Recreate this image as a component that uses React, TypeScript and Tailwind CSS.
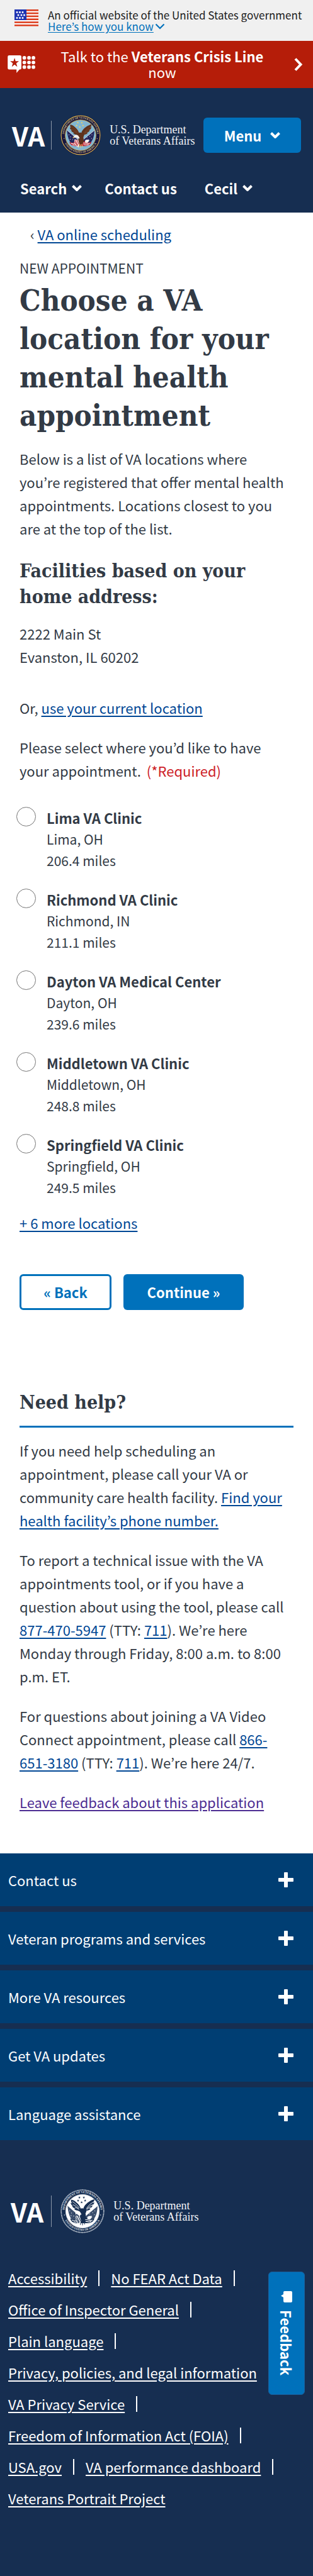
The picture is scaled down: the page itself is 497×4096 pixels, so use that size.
import { useState } from 'react';

const sans = "font-['Noto_Sans_CJK_KR','Noto_Sans',sans-serif]";
const slab = "font-['DejaVu_Serif_Condensed','DejaVu_Serif',serif]";
const link = 'text-[#004795] underline underline-offset-3';

const clinics = [
  { name: 'Lima VA Clinic', city: 'Lima, OH', miles: '206.4 miles' },
  { name: 'Richmond VA Clinic', city: 'Richmond, IN', miles: '211.1 miles' },
  { name: 'Dayton VA Medical Center', city: 'Dayton, OH', miles: '239.6 miles' },
  { name: 'Middletown VA Clinic', city: 'Middletown, OH', miles: '248.8 miles' },
  { name: 'Springfield VA Clinic', city: 'Springfield, OH', miles: '249.5 miles' },
];

const sections = [
  'Contact us',
  'Veteran programs and services',
  'More VA resources',
  'Get VA updates',
  'Language assistance',
];

const footerLinks = [
  'Accessibility',
  'No FEAR Act Data',
  'Office of Inspector General',
  'Plain language',
  'Privacy, policies, and legal information',
  'VA Privacy Service',
  'Freedom of Information Act (FOIA)',
  'USA.gov',
  'VA performance dashboard',
  'Veterans Portrait Project',
];

function Chevron({ width = 4 }: { width?: number }) {
  return (
    <svg viewBox="0 0 16 10" className="h-[10px] w-4" fill="none" stroke="currentColor" strokeWidth={width} aria-hidden="true">
      <path d="M1.5 1.5 8 8l6.5-6.5" />
    </svg>
  );
}

function Flag() {
  const stars = [
    [4, 4.5], [8.5, 4.5], [13, 4.5],
    [6, 9], [11, 9], [15.5, 9],
    [4, 13.5], [8.5, 13.5], [13, 13.5],
  ];
  return (
    <svg viewBox="0 0 38 27" className="h-[27px] w-[38px] shrink-0" aria-hidden="true">
      <rect width="38" height="27" fill="#fff" />
      {[0, 4.8, 9.6, 14.4, 19.2, 24].map((y) => (
        <rect key={y} y={y} width="38" height="2.6" fill="#db3e1f" />
      ))}
      <rect width="19" height="17" fill="#1e33b1" />
      {stars.map(([x, y]) => (
        <rect key={`${x}-${y}`} x={x - 1.3} y={y - 1.3} width="2.6" height="2.6" fill="#fff" />
      ))}
    </svg>
  );
}

function CrisisIcon() {
  return (
    <svg viewBox="0 0 56 36" className="h-7 w-11 shrink-0" fill="#fff" aria-hidden="true">
      <path d="M3 0h22a3 3 0 0 1 3 3v23a3 3 0 0 1-3 3h-1l-6 7v-7H3a3 3 0 0 1-3-3V3a3 3 0 0 1 3-3Z" />
      <path
        fill="#b51d09"
        d="m14 5 2.1 7h6.9l-5.5 4.1 2.1 7.4L14 19l-5.6 4.5 2.1-7.4L5 12h6.9Z"
      />
      {[34, 43.5, 52.5].map((x) => [5, 14.5, 24].map((y) => <circle key={`${x}-${y}`} cx={x} cy={y} r="3.7" />))}
    </svg>
  );
}

const star = 'm0-3 .7 2h2.1l-1.7 1.3.6 2L0 1.1l-1.7 1.2.6-2L-2.8-1h2.1Z';

function Seal({ id, mono = false, className }: { id: string; mono?: boolean; className: string }) {
  const c = mono
    ? { rim: '#d5dbe3', ring: '#162e51', letters: '#e6eaf0', sky: '#fff', wing: '#162e51', feather: '#fff', flag: '#3a4e6d', stars: '#162e51', red: '#162e51', white: '#fff' }
    : { rim: '#d8b350', ring: '#19163f', letters: '#dcc782', sky: '#82b6d3', wing: '#5e321d', feather: '#7d4a2c', flag: '#23265d', stars: '#f0d060', red: '#bf2433', white: '#f6f1ee' };
  return (
    <svg viewBox="0 0 100 100" className={className} role="img" aria-label="Department of Veterans Affairs seal">
      <defs>
        <path id={`${id}-top`} d="M9.6 56.5A41 41 0 1 1 90.4 56.5" />
        <path id={`${id}-bottom`} d="M7.5 62.5A44.3 44.3 0 0 0 92.5 62.5" />
      </defs>
      <circle cx="50" cy="50" r="50" fill={c.ring} />
      <circle cx="50" cy="50" r="48.3" fill="none" stroke={c.rim} strokeWidth={mono ? 2.4 : 1.8} strokeDasharray={mono ? '1.6 .8' : undefined} />
      <circle cx="50" cy="50" r="38" fill={c.sky} stroke={c.rim} strokeWidth="1.4" />
      <g fill={c.letters} fontFamily="Liberation Serif" fontWeight="700" fontSize="6.6" textAnchor="middle">
        <text><textPath href={`#${id}-top`} startOffset="50%">DEPARTMENT OF VETERANS AFFAIRS</textPath></text>
        <text><textPath href={`#${id}-bottom`} startOffset="50%">UNITED STATES OF AMERICA</textPath></text>
      </g>
      <circle cx="9" cy="58.5" r="1" fill={c.letters} />
      <circle cx="91" cy="58.5" r="1" fill={c.letters} />
      {[[43, 19], [53, 19], [40, 26], [56, 26], [48, 30]].map(([x, y]) => (
        <path key={`${x}-${y}`} transform={`translate(${x} ${y})`} d={star} fill={c.stars} />
      ))}
      <path d="M16 37 45 62 34 74C25 72 18 61 16 37Z" fill={c.flag} />
      <path d="M84 38 54 63 66 74C77 71 84 58 84 38Z" fill={c.flag} />
      <path d="M16 37 45 62M84 38 54 63" stroke={c.white} strokeWidth="1.3" />
      {[[21, 49], [25, 54], [24, 60], [30, 61], [78, 49], [73, 53], [77, 58], [70, 61], [66, 56]].map(([x, y]) => (
        <circle key={`${x}-${y}`} cx={x} cy={y} r=".9" fill={c.white} />
      ))}
      <path d="M22 66c10 7 15-1 22-1h14c6 0 9 7 19 1-2 9-9 11-18 11H40c-9 0-16-2-18-11Z" fill={c.red} />
      <path d="M26 70c8 4 12-1 18-1M30 74c6 2 9-1 14-1M56 69c8 0 10 4 17 1M57 73c5 0 8 3 13 0" fill="none" stroke={c.white} strokeWidth="1.6" />
      <path
        d="M24 24c0 4 0 6 3 8-2 0-3-1-4-1 1 4 3 6 6 7l-3 0c2 4 5 5 8 6l-3 1c3 3 6 3 9 4 1 5 3 8 6 9l8 0c3-2 4-5 5-9 4-1 7-2 9-4l-3-1c4-1 6-3 8-6l-3 0c4-2 6-4 7-8l-4 1c3-2 4-5 4-8-6 1-14 6-19 11-3 3-5 6-6 10-2-1-4-1-6 0-2-6-5-10-10-14-4-4-8-6-12-6Z"
        fill={c.wing}
      />
      <path d="M27 28c6 4 11 8 16 15M28 35c5 2 9 5 13 9M33 41c4 1 7 3 9 5M77 28c-7 3-13 8-18 16M74 35c-6 2-10 5-14 10M69 41c-4 1-7 3-10 6" fill="none" stroke={c.feather} strokeWidth="1.2" />
      <path d="M45 56c3-4 9-4 12 0l1 10-5 7h-5l-4-7Z" fill={c.wing} />
      <path d="M33 53c2-4 8-5 11-2 2 2 2 4 4 6-3 2-6 1-7-1-2-1-4 0-8 1 1-2 1-3 0-4Z" fill={c.white} />
      <path d="M33 53c-2 1-3 3-2 5l3-2Z" fill={c.stars} />
      <path d="M35 60l9 2 3 10-2 8-6-3-5-9Z" fill={c.white} />
      <path d="m36 62 7 13M40 61l6 12M35 66l7 11" stroke={c.red} strokeWidth="1.6" />
      <path d="M61 63c3-3 8-3 11 0l-5 6-6-1Z" fill={c.white} />
      <path d="m47 72-2 9M50 73v9M53 72l2 8" stroke={c.stars} strokeWidth="1.4" />
    </svg>
  );
}

function Brand({ id, mono = false }: { id: string; mono?: boolean }) {
  return (
    <a href="#home" className="flex items-center text-white">
      <span className="text-[42px] leading-[42px] font-bold">VA</span>
      <span className={mono ? 'ml-3 h-[50px] w-px bg-[#8b97a8]' : 'ml-2.5 h-[46px] w-px bg-[#8b97a8]'} />
      <Seal id={id} mono={mono} className={mono ? 'ml-3.5 size-[70px]' : 'ml-3.5 size-[64px]'} />
      <span className="ml-3.5 font-['Liberation_Serif',serif] text-[18px] leading-[18px] whitespace-nowrap text-[#f1f3f6]">
        U.S. Department
        <br />
        of Veterans Affairs
      </span>
    </a>
  );
}

export default function App() {
  const [choice, setChoice] = useState('');
  return (
    <div className={`relative min-h-screen bg-white text-[22px] leading-[37px] text-[#323a45] ${sans}`}>
      <div className="flex items-start gap-[15px] bg-[#f0f0f0] pt-[15px] pb-3.5 pl-[23px] text-[17px] leading-[18px] text-[#1b1b1b]">
        <Flag />
        <div>
          <p className="whitespace-nowrap">An official website of the United States government</p>
          <button type="button" className="flex items-center gap-0.5 text-[#0071bb]">
            <span className="underline underline-offset-2">Here’s how you know</span>
            <Chevron width={2.2} />
          </button>
        </div>
      </div>

      <a href="#crisis" className="flex items-center bg-[#b51d09] px-3 pt-3 pb-[13px] text-white">
        <CrisisIcon />
        <span className="mr-9 ml-7 flex-1 text-center leading-[25px]">
          Talk to the <strong>Veterans Crisis Line</strong> now
        </span>
        <svg viewBox="0 0 14 21" className="mr-1 h-[21px] w-3.5" fill="none" stroke="#fff" strokeWidth="4" aria-hidden="true">
          <path d="m2 1.5 8.5 9-8.5 9" />
        </svg>
      </a>

      <header className="bg-[#162e51] pt-[43px] pb-6 text-white">
        <div className="flex items-center justify-between px-[19px]">
          <Brand id="seal-header" />
          <button
            type="button"
            className="flex h-14 w-[155px] items-center justify-center gap-3.5 rounded-md bg-[#0071bb] leading-[30px] font-bold"
          >
            Menu
            <Chevron />
          </button>
        </div>
        <nav className="mt-[37px] flex items-center pl-8 leading-[30px] font-bold">
          <button type="button" className="flex items-center gap-2">
            Search
            <Chevron />
          </button>
          <a href="#contact" className="ml-9">
            Contact us
          </a>
          <button type="button" className="ml-11 flex items-center gap-2">
            Cecil
            <Chevron />
          </button>
        </nav>
      </header>

      <main className="px-[31px] pt-4 pb-[63px]">
        <div className="pl-[17px]">
          ‹{' '}
          <a href="#scheduling" className={link}>
            VA online scheduling
          </a>
        </div>
        <p className="mt-5 text-[21px] leading-[30px]">NEW APPOINTMENT</p>
        <h1 className={`mt-1.5 text-[47px] leading-[61px] font-bold ${slab}`}>
          Choose a VA location for your mental health appointment
        </h1>
        <p className="mt-5 pr-2">
          Below is a list of VA locations where you’re registered that offer mental health appointments. Locations
          closest to you are at the top of the list.
        </p>
        <h2 className={`mt-7 text-[30px] leading-[41px] font-bold ${slab}`}>Facilities based on your home address:</h2>
        <address className="mt-5 not-italic">
          2222 Main St
          <br />
          Evanston, IL 60202
        </address>
        <p className="mt-11">
          Or,{' '}
          <a href="#location" className={link}>
            use your current location
          </a>
        </p>

        <fieldset className="mt-[26px]">
          <legend className="pr-2">
            Please select where you’d like to have your appointment. <span className="ml-1 text-[#cd2026]">(*Required)</span>
          </legend>
          <div className="mt-[39px] flex flex-col gap-7">
            {clinics.map((clinic) => (
              <label key={clinic.name} className="-ml-[5px] flex items-start gap-[17px] text-[21px] leading-[34px]">
                <input
                  type="radio"
                  name="clinic"
                  value={clinic.name}
                  checked={choice === clinic.name}
                  onChange={() => setChoice(clinic.name)}
                  className="size-[31px] shrink-0 appearance-none rounded-full border border-[#757575] bg-white checked:bg-[#0071bb]"
                />
                <span className="flex flex-col">
                  <strong className="text-[22px]">{clinic.name}</strong>
                  <span>{clinic.city}</span>
                  <span>{clinic.miles}</span>
                </span>
              </label>
            ))}
          </div>
        </fieldset>

        <button type="button" className={`mt-[21px] block ${link}`}>
          + 6 more locations
        </button>

        <div className="mt-[63px] flex gap-[19px] font-bold">
          <button type="button" className="h-[57px] w-[146px] rounded-md border-3 border-[#0071bb] text-[#0071bb]">
            « Back
          </button>
          <button type="button" className="h-[57px] w-[191px] rounded-md bg-[#0071bb] text-white">
            Continue »
          </button>
        </div>

        <h2 className={`mt-[126px] border-b-3 border-[#0071bb] pb-[17px] text-[30px] leading-[41px] font-bold ${slab}`}>
          Need help?
        </h2>
        <p className="mt-[18px]">
          If you need help scheduling an appointment, please call your VA or community care health facility.{' '}
          <a href="#facilities" className={link}>
            Find your health facility’s phone number.
          </a>
        </p>
        <p className="mt-[26px]">
          To report a technical issue with the VA appointments tool, or if you have a question about using the tool,
          please call{' '}
          <a href="tel:8774705947" className={link}>
            877-470-5947
          </a>{' '}
          (TTY:{' '}
          <a href="tel:711" className={link}>
            711
          </a>
          ). We’re here Monday through Friday, 8:00 a.m. to 8:00 p.m. ET.
        </p>
        <p className="mt-[26px]">
          For questions about joining a VA Video Connect appointment, please call{' '}
          <a href="tel:8666513180" className={link}>
            866-651-3180
          </a>{' '}
          (TTY:{' '}
          <a href="tel:711" className={link}>
            711
          </a>
          ). We’re here 24/7.
        </p>
        <p className="mt-[26px]">
          <a href="#feedback" className="text-[#4c2c92] underline underline-offset-3">
            Leave feedback about this application
          </a>
        </p>
      </main>

      <footer className="bg-[#162e51] pb-[101px] text-white">
        <div className="flex flex-col gap-[9px]">
          {sections.map((title) => (
            <button
              key={title}
              type="button"
              className="flex h-[84px] items-center justify-between bg-[#003e73] pr-[31px] pl-[13px]"
            >
              {title}
              <svg viewBox="0 0 24 24" className="size-6" fill="#fff" aria-hidden="true">
                <rect x="9" y="0" width="6" height="24" rx="1" />
                <rect x="0" y="9" width="24" height="6" rx="1" />
              </svg>
            </button>
          ))}
        </div>
        <div className="mt-[78px] flex pl-[17px]">
          <Brand id="seal-footer" mono />
        </div>
        <ul className="mt-[46px] flex flex-wrap pl-[13px] leading-[50px]">
          {footerLinks.map((text, i) => (
            <li key={text} className="flex items-center whitespace-nowrap">
              <a href={`#link-${i}`} className="underline underline-offset-3">
                {text}
              </a>
              {i < footerLinks.length - 1 && <span className="mx-[18px] h-[25px] w-0.5 bg-white" />}
            </li>
          ))}
        </ul>
      </footer>

      <button
        type="button"
        className="absolute right-[13px] bottom-[290px] flex h-[196px] w-[58px] items-center justify-center gap-3 rounded-md border border-[#1a5f9c] bg-[#0071bb] leading-[30px] font-bold text-white [writing-mode:vertical-rl]"
      >
        <svg viewBox="0 0 18 18" className="size-[18px]" fill="#fff" aria-hidden="true">
          <path d="M6 0h10a2 2 0 0 1 2 2v14a2 2 0 0 1-2 2H6a2 2 0 0 1-2-2v-6L0 7.5 4 5V2a2 2 0 0 1 2-2Z" />
        </svg>
        Feedback
      </button>
    </div>
  );
}
